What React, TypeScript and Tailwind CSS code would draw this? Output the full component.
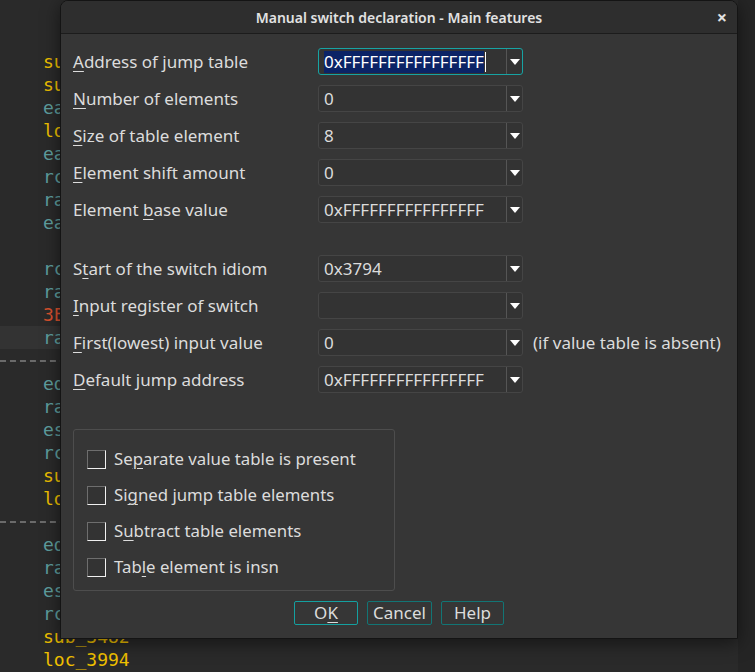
import React from "react";

type CodeLine = { text: string; color?: string; kind?: "dash" | "hl" };

const Y = "text-[#f0c000]";
const T = "text-[#5e9e9e]";
const R = "text-[#d9512e]";

const code: CodeLine[] = [
  { text: "" },
  { text: "" },
  { text: "sub_36A0", color: Y },
  { text: "sub_3820", color: Y },
  { text: "eax", color: T },
  { text: "loc_3794", color: Y },
  { text: "eax", color: T },
  { text: "rcx", color: T },
  { text: "rax", color: T },
  { text: "eax", color: T },
  { text: "" },
  { text: "rcx", color: T },
  { text: "rax", color: T },
  { text: "3Eh", color: R },
  { text: "rax", color: T, kind: "hl" },
  { text: "", kind: "dash" },
  { text: "edi", color: T },
  { text: "rax", color: T },
  { text: "esi", color: T },
  { text: "rcx", color: T },
  { text: "sub_3482", color: Y },
  { text: "loc_3994", color: Y },
  { text: "", kind: "dash" },
  { text: "edi", color: T },
  { text: "rax", color: T },
  { text: "esi", color: T },
  { text: "rcx", color: T },
  { text: "sub_3482", color: Y },
  { text: "loc_3994", color: Y },
];

function Mn({ children }: { children: React.ReactNode }) {
  return <span className="underline underline-offset-[3px] decoration-1">{children}</span>;
}

function Combo({ value, focused }: { value: string; focused?: boolean }) {
  return (
    <div
      className={`flex h-[27px] w-[205px] items-stretch rounded-[3px] border bg-[#333333] ${
        focused ? "border-[#17a3a3]" : "border-[#454545]"
      }`}
    >
      <div className="flex flex-1 items-center pl-[5px] text-[17px] text-[#dcdcdc]">
        {focused ? (
          <span className="flex items-center">
            <span className="bg-[#0b2366] leading-[22px] text-white">{value}</span>
            <span className="ml-px h-[20px] w-px bg-white" />
          </span>
        ) : (
          value
        )}
      </div>
      <div className="flex w-[16px] items-center justify-center border-l border-[#555555]">
        <svg width="10" height="6" viewBox="0 0 10 6">
          <path d="M0 0h10L5 6z" fill="#ffffff" />
        </svg>
      </div>
    </div>
  );
}

function Row({ label, value, focused, extra }: { label: React.ReactNode; value: string; focused?: boolean; extra?: string }) {
  return (
    <div className="flex h-[27px] items-center">
      <div className="w-[245px] text-[17px] text-[#dcdcdc]">{label}</div>
      <Combo value={value} focused={focused} />
      {extra && <div className="ml-[10px] text-[17px] text-[#dcdcdc]">{extra}</div>}
    </div>
  );
}

function Check({ label }: { label: React.ReactNode }) {
  return (
    <div className="flex h-[36px] items-center pl-[13px]">
      <div className="h-[19px] w-[19px] border border-t-[#6e6e6e] border-l-[#6e6e6e] border-r-[#f0f0f0] border-b-[#f0f0f0] bg-[#333333]" />
      <div className="ml-[8px] text-[16.8px] text-[#dcdcdc]">{label}</div>
    </div>
  );
}

function Btn({ children, primary, w }: { children: React.ReactNode; primary?: boolean; w: string }) {
  return (
    <div
      className={`flex h-[24px] items-center justify-center rounded-[2px] border text-[17px] text-[#dcdcdc] ${w} ${
        primary ? "border-[#14a0a0]" : "border-[#127575]"
      }`}
    >
      {children}
    </div>
  );
}

export default function App() {
  return (
    <div className="relative h-[672px] w-[755px] overflow-hidden bg-[#2a2a2a] font-['Noto_Sans',sans-serif]">
      <div className="flex flex-col pt-[4px] font-['DejaVu_Sans_Mono',monospace] text-[18px]">
        {code.map((l, i) =>
          l.kind === "dash" ? (
            <div key={i} className="flex h-[23px] items-center">
              <div className="w-full border-t-2 border-dashed border-[#6a6a6a]" />
            </div>
          ) : (
            <div
              key={i}
              className={`h-[23px] pl-[43px] leading-[23px] ${l.color ?? ""} ${l.kind === "hl" ? "bg-[#333333]" : ""}`}
            >
              {l.text}
            </div>
          )
        )}
      </div>

      <div className="absolute top-0 right-0 h-full w-[17px] bg-[#252525]" />

      <div className="absolute top-0 left-[60px] flex h-[639px] w-[678px] flex-col overflow-hidden rounded-t-[8px] border border-[#141414] bg-[#363636] shadow-[0_4px_18px_rgba(0,0,0,0.5)]">
        <div className="relative flex h-[33px] shrink-0 items-center justify-center border-b border-[#1c1c1c] bg-[#2e2e2e]">
          <span className="text-[14px] font-semibold text-[#e2e2e2]">Manual switch declaration - Main features</span>
          <span className="absolute right-[10px] top-[5px] text-[18px] font-bold leading-[22px] text-[#e2e2e2]">×</span>
        </div>

        <div className="flex flex-col pl-[12px] pt-[14px]">
          <div className="flex flex-col gap-[10px]">
            <Row label={<><Mn>A</Mn>ddress of jump table</>} value="0xFFFFFFFFFFFFFFFF" focused />
            <Row label={<><Mn>N</Mn>umber of elements</>} value="0" />
            <Row label={<><Mn>S</Mn>ize of table element</>} value="8" />
            <Row label={<><Mn>E</Mn>lement shift amount</>} value="0" />
            <Row label={<>Element <Mn>b</Mn>ase value</>} value="0xFFFFFFFFFFFFFFFF" />
          </div>
          <div className="mt-[32px] flex flex-col gap-[10px]">
            <Row label={<>S<Mn>t</Mn>art of the switch idiom</>} value="0x3794" />
            <Row label={<><Mn>I</Mn>nput register of switch</>} value="" />
            <Row label={<><Mn>F</Mn>irst(lowest) input value</>} value="0" extra="(if value table is absent)" />
            <Row label={<><Mn>D</Mn>efault jump address</>} value="0xFFFFFFFFFFFFFFFF" />
          </div>

          <div className="mt-[36px] flex h-[162px] w-[322px] flex-col rounded-[3px] border border-[#4d4d4d] pt-[11px]">
            <Check label={<>Se<Mn>p</Mn>arate value table is present</>} />
            <Check label={<>Si<Mn>g</Mn>ned jump table elements</>} />
            <Check label={<>S<Mn>u</Mn>btract table elements</>} />
            <Check label={<>Tab<Mn>l</Mn>e element is insn</>} />
          </div>
        </div>

        <div className="mt-[10px] flex justify-center gap-[9px]">
          <Btn primary w="w-[64px]">O<Mn>K</Mn></Btn>
          <Btn w="w-[65px]">Cancel</Btn>
          <Btn w="w-[63px]">Help</Btn>
        </div>
      </div>
    </div>
  );
}
